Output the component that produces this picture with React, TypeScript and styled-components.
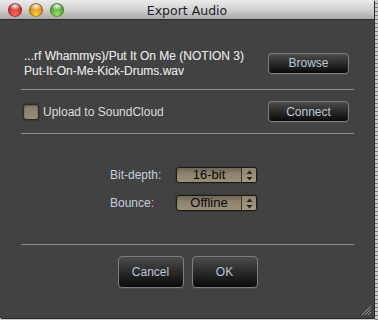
import { ReactElement } from "react";
import styled, { createGlobalStyle } from "styled-components";

const GlobalStyle = createGlobalStyle`
  html, body {
    margin: 0;
    padding: 0;
    background: #c6c6c6;
  }
  body {
    font-family: "Liberation Sans", Arial, sans-serif;
  }
`;

const Desk = styled.div`
  display: flex;
  width: 378px;
  height: 320px;
  background: repeating-linear-gradient(
    to bottom,
    #c8c8c8 0,
    #c8c8c8 3px,
    #7c7c7c 3px,
    #7c7c7c 4px
  );
  background-size: 3px 100%;
  background-position: right top;
  background-repeat: repeat-y;
  background-color: #cacaca;
`;

const Window = styled.div`
  position: relative;
  display: flex;
  flex-direction: column;
  width: 374px;
  height: 318px;
  background: #424242;
  box-shadow: 1px 1px 0 #2a2a2a;
`;

const TitleBar = styled.div`
  display: grid;
  grid-template-columns: 80px 1fr 80px;
  align-items: center;
  height: 19px;
  background: linear-gradient(to bottom, #ebebeb 0%, #d2d2d2 50%, #a9a9a9 100%);
  border-bottom: 1px solid #2c2c2c;
`;

const Lights = styled.div`
  display: flex;
  gap: 7px;
  padding-left: 8px;
`;

const Light = styled.span<{ $c1: string; $c2: string }>`
  width: 14px;
  height: 14px;
  border-radius: 50%;
  box-shadow: inset 0 0 0 1px rgba(0, 0, 0, 0.3);
  background: radial-gradient(
      ellipse 45% 30% at 50% 22%,
      rgba(255, 255, 255, 0.95) 0,
      rgba(255, 255, 255, 0) 100%
    ),
    radial-gradient(circle at 50% 80%, ${(p) => p.$c2} 0, ${(p) => p.$c1} 75%);
`;

const Title = styled.div`
  text-align: center;
  font-family: "DejaVu Sans", sans-serif;
  font-size: 12.5px;
  color: #1e1e1e;
  padding-top: 1px;
`;

const Body = styled.div`
  display: flex;
  flex-direction: column;
  flex: 1;
  padding: 0 20px 0 21px;
`;

const Row = styled.div<{ $h: number; $pt?: number }>`
  display: flex;
  align-items: center;
  justify-content: space-between;
  box-sizing: border-box;
  height: ${(p) => p.$h}px;
  padding: ${(p) => p.$pt ?? 0}px 5px 0 3px;
`;

const Separator = styled.hr`
  margin: 0;
  border: none;
  height: 1px;
  background: #8c8c8c;
`;

const PathText = styled.div`
  font-size: 12px;
  line-height: 15px;
  color: #e0e0e0;
  padding-top: 1px;
  text-shadow: 0 0 0.4px rgba(224, 224, 224, 0.6);
`;

const DarkButton = styled.button<{ $w: number; $h: number }>`
  width: ${(p) => p.$w}px;
  height: ${(p) => p.$h}px;
  padding: 0;
  border: 1px solid #7e7e7e;
  border-radius: 4px;
  background: linear-gradient(to bottom, #4c4c4c 0%, #2a2a2a 50%, #0a0a0a 100%);
  color: #bcc6d6;
  font-family: "Liberation Sans", Arial, sans-serif;
  font-size: 12px;
  box-shadow: 0 1px 0 rgba(255, 255, 255, 0.06);
`;

const CheckLabel = styled.label`
  display: flex;
  align-items: center;
  gap: 4px;
  font-size: 12px;
  color: #dcdcdc;
  margin-left: -1px;
`;

const CheckBox = styled.span`
  width: 14px;
  height: 14px;
  border-radius: 3px;
  border: 1px solid #2e2a22;
  background: linear-gradient(to bottom, #877e6d, #968c7a);
  box-shadow: inset 0 1px 2px rgba(0, 0, 0, 0.35), 0 0 2px rgba(0, 0, 0, 0.5);
  margin-top: 1px;
`;

const Settings = styled.div`
  display: grid;
  grid-template-columns: 66px 81px;
  row-gap: 12px;
  align-items: center;
  align-content: start;
  height: 110px;
  padding: 33px 0 0 89px;
  box-sizing: border-box;
`;

const FieldLabel = styled.span`
  font-size: 12px;
  color: #c6cedc;
`;

const Select = styled.div`
  display: flex;
  box-sizing: border-box;
  height: 16px;
  border: 1px solid #1e1a12;
  border-radius: 3px;
  background: linear-gradient(to bottom, #6f6555 0%, #8c826e 40%, #9a8f7a 100%);
  box-shadow: 0 0 2px rgba(0, 0, 0, 0.5);
`;

const SelectValue = styled.span`
  flex: 1;
  text-align: center;
  font-size: 13px;
  line-height: 14px;
  color: #0a0a0a;
`;

const Stepper = styled.span`
  display: flex;
  align-items: center;
  justify-content: center;
  width: 14px;
  border-left: 1px solid #3a3326;
  background: linear-gradient(to bottom, #8e846f, #a59a84);
  border-radius: 0 2px 2px 0;
`;

const Footer = styled.div`
  display: flex;
  justify-content: center;
  gap: 8px;
  padding-top: 11px;
`;

const Grip = styled.svg`
  position: absolute;
  right: 2px;
  bottom: 2px;
`;

function Arrows(): ReactElement {
  return (
    <svg width="7" height="11" viewBox="0 0 7 11">
      <path d="M3.5 0.5 L6.5 4 L0.5 4 Z" fill="#2a2418" />
      <path d="M3.5 10.5 L6.5 7 L0.5 7 Z" fill="#2a2418" />
    </svg>
  );
}

function App(): ReactElement {
  return (
    <Desk>
      <GlobalStyle />
      <Window>
        <TitleBar>
          <Lights>
            <Light $c1="#b81c1c" $c2="#ff6a60" />
            <Light $c1="#c87808" $c2="#ffcc40" />
            <Light $c1="#3c9020" $c2="#9ee070" />
          </Lights>
          <Title>Export Audio</Title>
          <div />
        </TitleBar>
        <Body>
          <Row $h={69} $pt={17}>
            <PathText>
              ...rf Whammys)/Put It On Me (NOTION 3)
              <br />
              Put-It-On-Me-Kick-Drums.wav
            </PathText>
            <DarkButton $w={81} $h={21}>
              Browse
            </DarkButton>
          </Row>
          <Separator />
          <Row $h={43}>
            <CheckLabel>
              <CheckBox />
              Upload to SoundCloud
            </CheckLabel>
            <DarkButton $w={81} $h={21}>
              Connect
            </DarkButton>
          </Row>
          <Separator />
          <Settings>
            <FieldLabel>Bit-depth:</FieldLabel>
            <Select>
              <SelectValue>16-bit</SelectValue>
              <Stepper>
                <Arrows />
              </Stepper>
            </Select>
            <FieldLabel>Bounce:</FieldLabel>
            <Select>
              <SelectValue>Offline</SelectValue>
              <Stepper>
                <Arrows />
              </Stepper>
            </Select>
          </Settings>
          <Separator />
          <Footer>
            <DarkButton $w={66} $h={32}>
              Cancel
            </DarkButton>
            <DarkButton $w={66} $h={32}>
              OK
            </DarkButton>
          </Footer>
        </Body>
        <Grip width="12" height="12" viewBox="0 0 12 12">
          <path d="M11 2 L2 11 M11 5 L5 11 M11 8 L8 11" stroke="#9a9a9a" strokeWidth="1" />
        </Grip>
      </Window>
    </Desk>
  );
}

export default App;
